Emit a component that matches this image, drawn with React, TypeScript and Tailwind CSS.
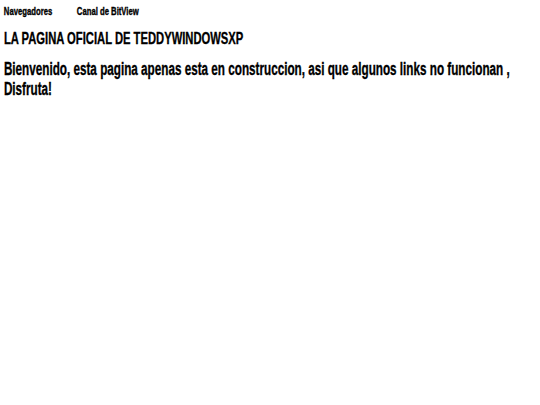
export default function App() {
  return (
    <div
      className="min-h-screen overflow-hidden bg-white font-bold text-black [-webkit-text-stroke:0.35px_black]"
      style={{ fontFamily: '"Liberation Sans", Arial, sans-serif' }}
    >
      <nav className="flex w-[700px] origin-left scale-x-[0.77] gap-[32px] pl-[5px] pt-[6px] text-[10px] leading-[12px]">
        <a>Navegadores</a>
        <a>Canal de BitView</a>
      </nav>
      <h1 className="mt-[11px] w-[800px] origin-left scale-x-[0.66] pl-[6px] text-[17px] leading-[20px]">
        LA PAGINA OFICIAL DE TEDDYWINDOWSXP
      </h1>
      <p className="mt-[10px] w-[805px] origin-top-left scale-x-[0.65] pl-[6px] text-[18px] leading-[20px]">
        Bienvenido, esta pagina apenas esta en construccion, asi que algunos links no funcionan , Disfruta!
      </p>
    </div>
  );
}
